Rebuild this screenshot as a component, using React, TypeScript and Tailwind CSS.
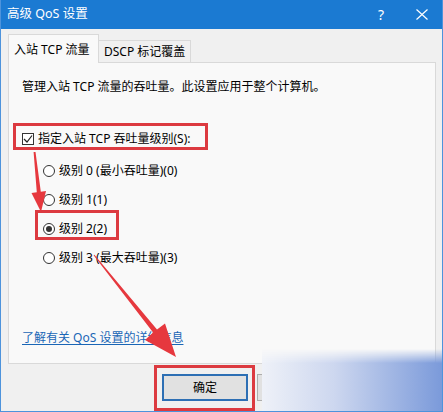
import type { ReactNode } from 'react'

const font = { fontFamily: '"Noto Sans", "Noto Sans CJK SC", sans-serif' }

function Radio({ checked, children }: { checked?: boolean; children: ReactNode }) {
  return (
    <div className="flex items-center h-[29px]">
      <span className="w-[12px] h-[12px] rounded-full border border-[#333] bg-white flex items-center justify-center">
        {checked && <span className="w-[6px] h-[6px] rounded-full bg-[#333]" />}
      </span>
      <span className="ml-[4px]">{children}</span>
    </div>
  )
}

function Arrows() {
  return (
    <svg className="absolute inset-0 pointer-events-none" width="443" height="412" viewBox="0 0 443 412">
      {/* arrow 1: from checkbox box down to level 2 */}
      <polygon
        fill="#e6383e"
        points="33.5,152 32.6,152.1 35.8,192.3 30.5,192.9 40,212 45,191.1 39.8,191.8 34.5,151.9"
      />
      {/* arrow 2: from level 3 down to OK button */}
      <polygon
        fill="#e6383e"
        points="92.6,255.3 93.4,254.7 156,329.5 164,323.5 175,357 144,340 152.1,332.5"
      />
    </svg>
  )
}

export default function App() {
  return (
    <div
      className="relative w-[443px] h-[412px] overflow-hidden bg-[#f0f0f0] border-x border-b border-[#4d93dc] flex flex-col text-[12px] text-black"
      style={font}
    >
      <div className="h-[29px] -mx-px bg-[#1b7ad2] text-white flex items-center pl-[7px] shrink-0">
        <span className="text-[12.5px]">高级 QoS 设置</span>
        <span className="ml-auto text-[14px] mr-[32px]">?</span>
        <svg width="12" height="11" viewBox="0 0 12 11" className="mr-[15px]">
          <path d="M0.5 0.5 L11.5 10.5 M11.5 0.5 L0.5 10.5" stroke="#fff" strokeWidth="1.2" />
        </svg>
      </div>

      <div className="px-[7px] pt-[5px]">
        <div className="flex items-end h-[28px]">
          <div className="relative z-10 -mb-px h-[29px] w-[91px] border border-b-0 border-[#d9d9d9] bg-[#f9f9f9] flex items-center pl-[5px] pt-[2px]">
            入站 TCP 流量
          </div>
          <div className="h-[22px] w-[92px] border border-l-0 border-b-0 border-[#d9d9d9] bg-[#f0f0f0] flex items-center pl-[5px] pt-[1px]">
            DSCP 标记覆盖
          </div>
        </div>

        <div className="h-[302px] w-[428px] border border-[#d9d9d9] bg-[#f9f9f9] pl-[13px] flex flex-col leading-[16px]">
          <p className="mt-[16px]">管理入站 TCP 流量的吞吐量。此设置应用于整个计算机。</p>

          <div className="mt-[28px] -ml-[9px] h-[27px] w-[195px] border-[3px] border-[#dc3a40] flex items-center pl-[6px] pt-[4px]">
            <span className="w-[12px] h-[12px] border border-[#333] bg-white flex items-center justify-center">
              <svg width="10" height="10" viewBox="0 0 10 10">
                <path d="M1 5 L4 8 L9 1.5" fill="none" stroke="#222" strokeWidth="1.2" />
              </svg>
            </span>
            <span className="ml-[4px]">指定入站 TCP 吞吐量级别(S):</span>
          </div>

          <div className="ml-[21px] mt-[6px]">
            <Radio>级别 0 (最小吞吐量)(0)</Radio>
            <Radio>级别 1(1)</Radio>
            <div className="relative">
              <span className="absolute -left-[8px] -top-[4px] w-[84px] h-[30px] border-[3px] border-[#dc3a40]" />
              <Radio checked>级别 2(2)</Radio>
            </div>
            <Radio>级别 3 (最大吞吐量)(3)</Radio>
          </div>

          <a className="mt-auto mb-[17px] self-start text-[#1a66b6] underline underline-offset-2">
            了解有关 QoS 设置的详细信息
          </a>
        </div>
      </div>

      <div className="flex pl-[161px] pt-[10px]">
        <div className="relative">
          <span className="absolute -left-[8px] -top-[9px] w-[101px] h-[46px] border-[3px] border-[#dc3a40]" />
          <button className="w-[86px] h-[27px] border-2 border-[#2d6fb4] bg-[#e1e1e1]">确定</button>
        </div>
        <button className="ml-[9px] w-[86px] h-[27px] border border-[#adadad] bg-[#e1e1e1]">取消</button>
      </div>

      <div className="absolute right-0 bottom-0 w-[180px] h-[62px] bg-[linear-gradient(to_right,#eef1f8,#cdd7ef_40%,#7b9ada)] [mask-image:linear-gradient(to_bottom,transparent,black_14px)]" />

      <Arrows />
    </div>
  )
}
